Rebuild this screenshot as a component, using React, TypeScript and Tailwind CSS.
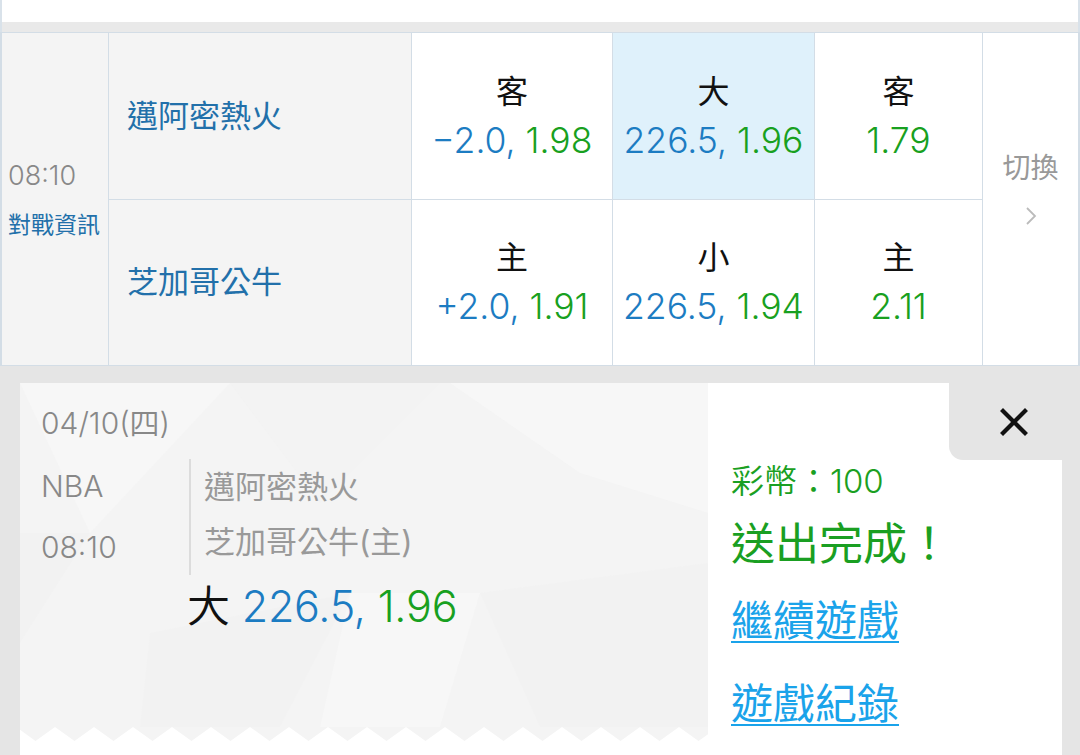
import React from "react";

// One side of the bet: label on top, line + odds under it
interface Pick {
  label: string;
  line?: string;
  odds: string;
  active?: boolean;
}

const rowOne: Pick[] = [
  { label: "客", line: "−2.0", odds: "1.98" },
  { label: "大", line: "226.5", odds: "1.96", active: true },
  { label: "客", odds: "1.79" },
];

const rowTwo: Pick[] = [
  { label: "主", line: "+2.0", odds: "1.91" },
  { label: "小", line: "226.5", odds: "1.94" },
  { label: "主", odds: "2.11" },
];

const OddsCell = ({ pick }: { pick: Pick }) => (
  <div
    className={`flex flex-col items-center justify-center ${
      pick.active ? "bg-[#dff1fb]" : "bg-white"
    }`}
  >
    <span className="text-[32px] leading-[46px] text-[#111]">{pick.label}</span>
    <span className="mt-[3px] text-[35.5px] leading-[46px] font-[350]">
      {pick.line && <span className="text-[#1c7cc2]">{pick.line}, </span>}
      <span className="text-[#18a020]">{pick.odds}</span>
    </span>
  </div>
);

const TeamCell = ({ name }: { name: string }) => (
  <div className="flex items-center bg-[#f4f4f4] pl-[18px] text-[31px] text-[#2270aa]">
    {name}
  </div>
);

// faint polygon texture behind the ticket
const Texture = () => (
  <svg className="absolute inset-0" width="688" height="344" viewBox="0 0 688 344">
    <polygon points="0,0 210,0 70,150" fill="#f8f8f8" opacity="0.7" />
    <polygon points="210,0 420,0 300,120" fill="#f1f1f1" opacity="0.5" />
    <polygon points="0,150 70,150 0,260" fill="#f1f1f1" opacity="0.4" />
    <polygon points="430,0 688,0 688,130 560,90" fill="#f8f8f8" opacity="0.7" />
    <polygon points="130,250 330,210 260,344 120,344" fill="#f1f1f1" opacity="0.4" />
    <polygon points="460,210 688,180 688,344 520,344" fill="#f1f1f1" opacity="0.4" />
    <polygon points="330,210 460,210 420,344 300,344" fill="#f8f8f8" opacity="0.6" />
  </svg>
);

const Zigzag = () => {
  const pts: string[] = ["0,0"];
  for (let x = -4; x <= 700; x += 39) {
    pts.push(`${x},0`, `${x + 19.5},14`);
  }
  pts.push("688,0");
  return (
    <svg width="688" height="14" viewBox="0 0 688 14" className="block">
      <polygon points={pts.join(" ")} fill="#f4f4f4" strokeLinejoin="round" />
    </svg>
  );
};

export default function App() {
  return (
    <div className="w-[1080px] h-[755px] overflow-hidden bg-[#e5e5e5] font-[Inter,'Noto_Sans_CJK_TC',sans-serif]">
      <div className="h-[22px] bg-white border-x-2 border-[#d9e2ea]" />
      <div className="h-[10px] bg-[#e9e9e9] border-x-2 border-[#d9e2ea]" />

      {/* odds table */}
      <div className="grid grid-cols-[106px_302px_200px_201px_167px_1fr] grid-rows-[166px_165px] gap-px bg-[#d3dde6] border-y border-x-2 border-[#d3dde6]">
        <div className="row-span-2 flex flex-col justify-center bg-[#f4f4f4] pl-[6px]">
          <span className="text-[27px] leading-[34px] font-[350] text-[#888]">08:10</span>
          <span className="mt-[18px] text-[23px] leading-[28px] text-[#2270aa]">對戰資訊</span>
        </div>
        <TeamCell name="邁阿密熱火" />
        {rowOne.map((p, i) => (
          <OddsCell key={i} pick={p} />
        ))}
        <div className="row-span-2 flex flex-col items-center justify-center bg-white pb-[23px]">
          <span className="text-[28px] leading-[36px] text-[#999]">切換</span>
          <svg className="mt-[21px]" width="14" height="18" viewBox="0 0 14 18">
            <polyline points="3,1 11,9 3,17" fill="none" stroke="#bbb" strokeWidth="1.8" />
          </svg>
        </div>
        <TeamCell name="芝加哥公牛" />
        {rowTwo.map((p, i) => (
          <OddsCell key={i} pick={p} />
        ))}
      </div>

      {/* ticket */}
      <div className="pl-[20px] pr-[18px] pt-[17px]">
        <div className="relative flex bg-white">
          <div className="w-[688px]">
            <div className="relative h-[344px] bg-[#f4f4f4] pl-[21px]">
              <Texture />
              <div className="relative">
                <div className="pt-[22px] text-[30px] leading-[36px] font-[350] text-[#888]">04/10(四)</div>
                <div className="mt-[18px] flex">
                  <div className="w-[150px] border-r-2 border-[#dcdcdc] text-[30px] leading-[55px] font-[350] text-[#888]">
                    <div>NBA</div>
                    <div className="pt-[6px]">08:10</div>
                  </div>
                  <div className="pl-[13px] text-[31px] leading-[55px] text-[#999]">
                    <div>邁阿密熱火</div>
                    <div>芝加哥公牛(主)</div>
                  </div>
                </div>
                <div className="ml-[146px] mt-[6px] text-[43px] leading-[50px] font-[350] tracking-[-0.2px]">
                  <span className="text-[#111]">大 </span>
                  <span className="text-[#1c7cc2]">226.5, </span>
                  <span className="text-[#18a020]">1.96</span>
                </div>
              </div>
            </div>
            <Zigzag />
          </div>

          <div className="flex-1 pl-[23px] pt-[78px] h-[372px]">
            <div className="text-[33px] leading-[40px] font-[350] text-[#1a9f22]">彩幣：100</div>
            <div className="mt-[16px] text-[44px] leading-[54px] text-[#1a9f22]">送出完成！</div>
            <div className="mt-[25px] text-[42px] leading-[50px] text-[#1aa3ea] underline decoration-2 underline-offset-[5px]">
              繼續遊戲
            </div>
            <div className="mt-[33px] text-[42px] leading-[50px] text-[#1aa3ea] underline decoration-2 underline-offset-[5px]">
              遊戲紀錄
            </div>
          </div>

          {/* close tab notched into the corner */}
          <div className="absolute right-0 top-0 flex h-[77px] w-[113px] items-center justify-center rounded-bl-[14px] bg-[#e5e5e5] pl-[16px]">
            <svg width="28" height="28" viewBox="0 0 28 28">
              <path d="M3 3 L25 25 M25 3 L3 25" stroke="#111" strokeWidth="4.2" strokeLinecap="square" />
            </svg>
          </div>
        </div>
      </div>
    </div>
  );
}
